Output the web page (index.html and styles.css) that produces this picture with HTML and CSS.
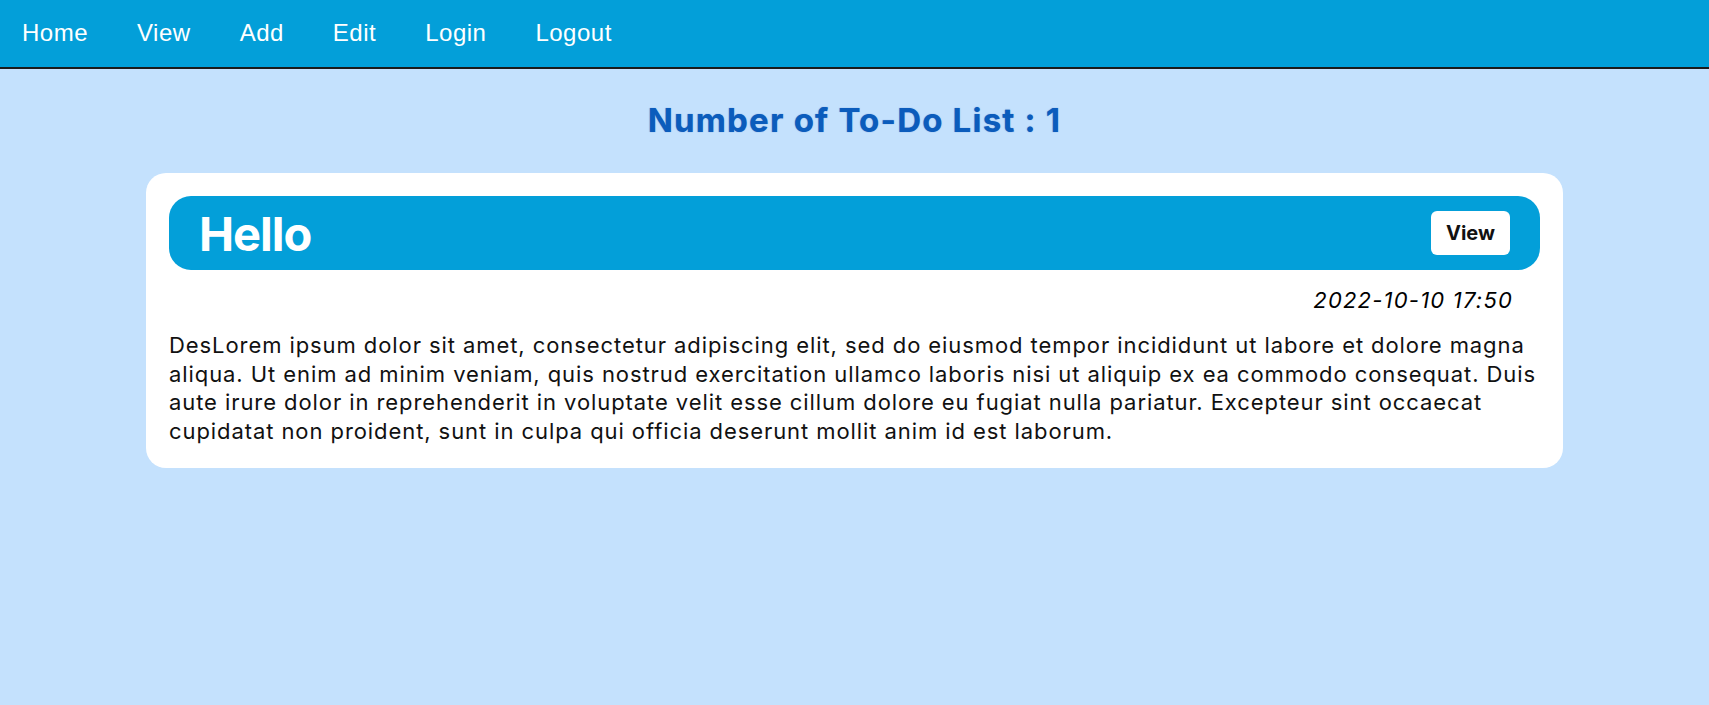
FILE: index.html
```html
<!DOCTYPE html>
<html lang="en">
<head>
<meta charset="utf-8">
<title>To-Do List</title>
<link rel="stylesheet" href="styles.css">
</head>
<body>
<nav class="navbar">
  <a class="nav-link" href="#">Home</a>
  <a class="nav-link" href="#">View</a>
  <a class="nav-link" href="#">Add</a>
  <a class="nav-link" href="#">Edit</a>
  <a class="nav-link" href="#">Login</a>
  <a class="nav-link" href="#">Logout</a>
</nav>
<main class="main">
  <h1 class="count-title">Number of To-Do List : 1</h1>
  <section class="todo-card">
    <div class="todo-header">
      <h2 class="todo-title">Hello</h2>
      <button class="view-btn" type="button">View</button>
    </div>
    <div class="todo-date">2022-10-10 17:50</div>
    <p class="todo-desc">DesLorem ipsum dolor sit amet, consectetur adipiscing elit, sed do eiusmod tempor incididunt ut labore et dolore magna aliqua. Ut enim ad minim veniam, quis nostrud exercitation ullamco laboris nisi ut aliquip ex ea commodo consequat. Duis aute irure dolor in reprehenderit in voluptate velit esse cillum dolore eu fugiat nulla pariatur. Excepteur sint occaecat cupidatat non proident, sunt in culpa qui officia deserunt mollit anim id est laborum.</p>
  </section>
</main>
</body>
</html>
```
FILE: styles.css
```css
* { box-sizing: border-box; }

html, body {
  margin: 0;
  padding: 0;
}

body {
  background: #c4e1fd;
  font-family: Inter, "Noto Sans", sans-serif;
  color: #000;
}

.navbar {
  height: 67px;
  background: #039fd9;
  display: flex;
  align-items: center;
  gap: 49px;
  padding-left: 22px;
  padding-bottom: 1px;
  box-shadow: 0 2px 0 #1a1a1a;
}

.nav-link {
  font-family: "Liberation Sans", Arial, sans-serif;
  font-size: 24px;
  letter-spacing: 0.5px;
  color: #fff;
  text-decoration: none;
}

.main {
  display: flex;
  flex-direction: column;
  align-items: center;
}

.count-title {
  margin: 33px 0 33px;
  font-size: 33px;
  font-weight: 700;
  letter-spacing: 1.2px;
  color: #0b5cbc;
  text-shadow: 0 0 1px rgba(40, 90, 180, 0.7);
  line-height: normal;
}

.todo-card {
  width: 1417px;
  background: #fff;
  border-radius: 20px;
  padding: 23px;
}

.todo-header {
  height: 74px;
  background: #039fd9;
  border-radius: 22px;
  padding: 0 30px;
  display: flex;
  align-items: center;
  justify-content: space-between;
}

.todo-title {
  margin: 0;
  font-size: 47px;
  font-weight: 700;
  letter-spacing: -1px;
  color: #fff;
  line-height: 1;
}

.view-btn {
  width: 79px;
  height: 44px;
  background: #fff;
  border: none;
  border-radius: 6px;
  font-family: Inter, sans-serif;
  font-size: 20px;
  font-weight: 700;
  color: #111;
  padding: 0;
}

.todo-date {
  margin-top: 17px;
  padding-right: 27px;
  text-align: right;
  font-style: italic;
  font-size: 22px;
  letter-spacing: 1.2px;
}

.todo-desc {
  margin: 18px 0 0;
  font-size: 22px;
  letter-spacing: 0.92px;
  line-height: 28.6px;
  color: #111;
}
```
